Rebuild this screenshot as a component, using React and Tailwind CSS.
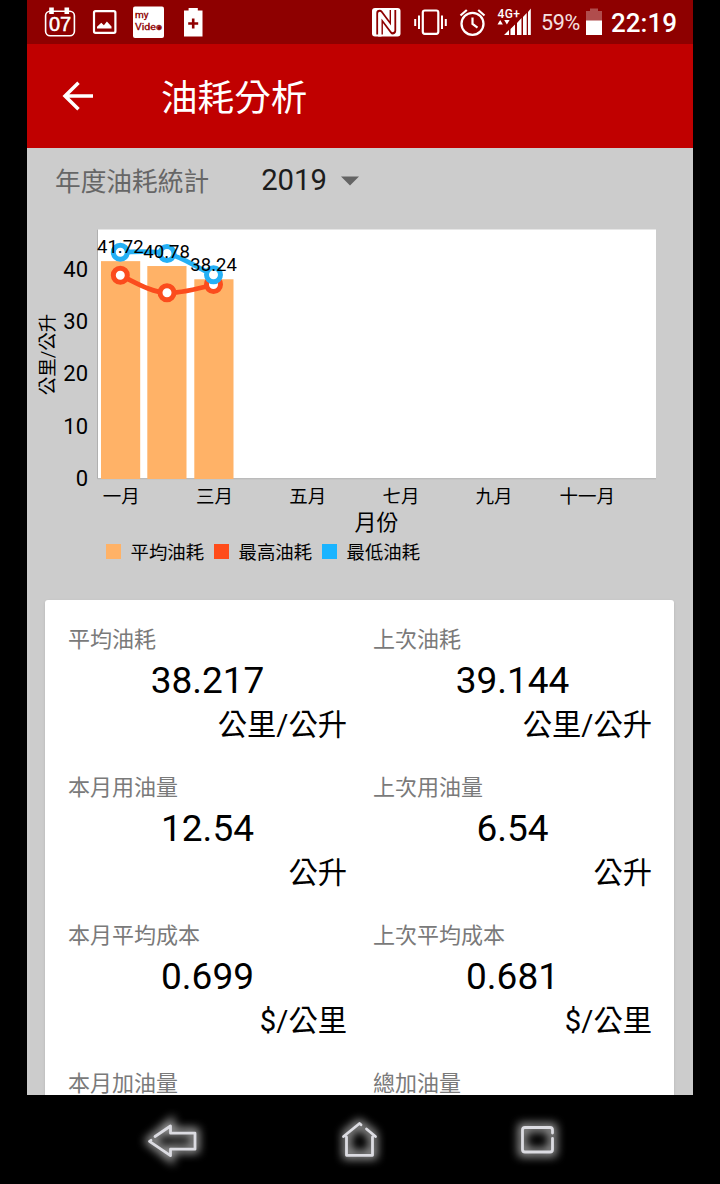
const months = ["一月", "三月", "五月", "七月", "九月", "十一月"];

const bars = [
  { x: 74, value: 41.72 },
  { x: 120.3, value: 40.78 },
  { x: 167.3, value: 38.24 },
];

const stats = [
  { label: "平均油耗", value: "38.217", unit: "公里/公升" },
  { label: "上次油耗", value: "39.144", unit: "公里/公升" },
  { label: "本月用油量", value: "12.54", unit: "公升" },
  { label: "上次用油量", value: "6.54", unit: "公升" },
  { label: "本月平均成本", value: "0.699", unit: "$/公里" },
  { label: "上次平均成本", value: "0.681", unit: "$/公里" },
  { label: "本月加油量", value: "", unit: "" },
  { label: "總加油量", value: "", unit: "" },
];

// y position inside the chart svg, 0 sits on the x axis
const toY = (value) => 266.5 - value * 5.21;

function StatusBar() {
  return (
    <div className="flex h-[44px] shrink-0 items-center bg-[#8e0000] text-white">
      <svg className="h-[44px] w-[210px]" viewBox="0 0 210 44" fill="none">
        {/* calendar */}
        <rect x="18.6" y="11.2" width="28.8" height="24.6" rx="4.5" stroke="#fff" strokeWidth="1.6" />
        <rect x="22.2" y="7.5" width="4.6" height="6.5" fill="#fff" />
        <rect x="37.5" y="7.5" width="4.6" height="6.5" fill="#fff" />
        <text x="33" y="30.5" textAnchor="middle" fontSize="20" fill="#fff" stroke="#fff" strokeWidth="0.5" className="font-['Liberation_Sans']">07</text>
        {/* picture */}
        <rect x="67" y="11.2" width="21.4" height="21.6" rx="1.5" stroke="#fff" strokeWidth="2.2" />
        <path d="M70 28.5v-1.7l4.3-4 2.6 2.4 3-3.7 4.6 5v2z" fill="#fff" />
        {/* myVideo */}
        <rect x="106" y="6.5" width="31" height="31.5" rx="2" fill="#fff" />
        <text x="108" y="18.3" fontSize="9" fill="#8e0000" stroke="#8e0000" strokeWidth="0.3" textLength="13.5" lengthAdjust="spacingAndGlyphs" className="font-['Roboto']">my</text>
        <text x="108" y="30.3" fontSize="9.5" fill="#8e0000" stroke="#8e0000" strokeWidth="0.3" textLength="27" lengthAdjust="spacingAndGlyphs" className="font-['Roboto']">Video</text>
        <circle cx="132.2" cy="27.7" r="1.8" fill="#8e0000" />
        {/* battery plus */}
        <path d="M157 10.5h4.6V8h9.2v2.5h4.7v26H157z" fill="#fff" />
        <path d="M166.2 18.5v10M161.2 23.5h10" stroke="#8e0000" strokeWidth="2.6" />
      </svg>
      <svg className="ml-[131px] h-[44px] w-[170px]" viewBox="0 0 170 44" fill="none">
        {/* nfc */}
        <rect x="4" y="8" width="28.5" height="28.5" rx="3" fill="#fff" />
        <path d="M11.6 34.5V13L24.9 31V10" stroke="#8e0000" strokeWidth="6.6" strokeLinejoin="round" />
        <path d="M11.8 36.5V13.5L24.7 30.500V8" stroke="#fff" strokeWidth="3.400" strokeLinejoin="round" />
        {/* vibrate */}
        <rect x="54.8" y="10.5" width="15.5" height="23.3" rx="2" stroke="#fff" strokeWidth="2.2" />
        <path d="M51 15.5v13.5M74 15.5v13.5M47.2 19v7M77.8 19v7" stroke="#fff" strokeWidth="2" />
        {/* alarm */}
        <circle cx="104.5" cy="23.8" r="11" stroke="#fff" strokeWidth="2.3" />
        <path d="M104.5 17.5v6.5l5 3.6M92.5 15.5l6.3-5.5M116.5 15.5l-6.3-5.5" stroke="#fff" strokeWidth="2.2" />
        {/* signal */}
        <text x="129.5" y="17.5" fontSize="12" fontWeight="500" fill="#fff" textLength="22.5" className="font-['Roboto']">4G+</text>
        <path d="M129.5 24.5 132.2 20l2.7 4.5zM136.2 20h5.4l-2.7 4.5z" fill="#fff" />
        <path d="M136 35l5-5v5zM142.5 29l4.5-4.5V35h-4.5zM149 23l4.5-5v17H149zM155 17l3.7-4v22H155zM160 12l2.8-3.5V35H160z" fill="#fff" />
      </svg>
      <span className="mt-[3px] ml-[3px] text-[21.5px] tracking-[-0.3px] text-[#f5e0e0]">59%</span>
      <svg className="ml-[5px] h-[44px] w-[18px]" viewBox="0 0 18 44">
        <path d="M1 11h4V8.5h8V11h4v10H1z" fill="#fff" fillOpacity="0.3" />
        <path d="M1 20.5h16V35H1z" fill="#fff" />
      </svg>
      <span className="mt-[2px] ml-[8px] text-[26px] font-medium">22:19</span>
    </div>
  );
}

function Toolbar() {
  return (
    <div className="flex h-[104px] shrink-0 items-center bg-[#c00000] text-white">
      <svg className="ml-[35px] h-[32px] w-[32px]" viewBox="0 0 32 32" fill="none">
        <path d="M31 16H3.5M16.5 2.7 3 16l13.5 13.3" stroke="#fff" strokeWidth="3.5" />
      </svg>
      <h1 className="mt-[6px] ml-[67px] text-[36.6px] leading-none">油耗分析</h1>
    </div>
  );
}

function FuelChart() {
  return (
    <svg className="h-[367px] w-[666px] shrink-0" viewBox="0 0 666 367" fill="none">
      <rect x="70.5" y="17.5" width="558.5" height="249" fill="#fff" />
      <path d="M70.5 17.5v249.2H629" stroke="#b0b0b0" />
      {bars.map((bar) => (
        <rect key={bar.x} x={bar.x} y={toY(bar.value)} width="39.2" height={bar.value * 5.21 + 0.5} fill="#ffb267" />
      ))}

      {/* highest */}
      <path d="M93.3 63.3C106 69 124 80.5 140 80.8C156 81 172 76.5 186.5 72.5" stroke="#fb4c1d" strokeWidth="4.8" />
      <g fill="#fff" stroke="#fb4c1d" strokeWidth="5">
        <circle cx="93.3" cy="63.3" r="7" />
        <circle cx="140" cy="80.8" r="7" />
        <circle cx="186.5" cy="72.5" r="7" />
      </g>
      {/* lowest */}
      <path d="M93.3 40.2C108 40 124 38 140 41.5C156 45 172 57 186.5 62.8" stroke="#25b0f5" strokeWidth="4.8" />
      <g fill="#fff" stroke="#25b0f5" strokeWidth="5">
        <circle cx="93.3" cy="40.2" r="7" />
        <circle cx="140" cy="41.5" r="7" />
        <circle cx="186.5" cy="62.8" r="7" />
      </g>

      <g fill="#000" fontSize="18.5" textAnchor="middle">
        {bars.map((bar) => (
          <text key={bar.x} x={bar.x + 19.3} y={toY(bar.value) - 8.5}>{bar.value}</text>
        ))}
        {months.map((month, i) => (
          <text key={month} x={94.3 + i * 93.2} y={290.5}>{month}</text>
        ))}
        <text transform="translate(27 142.5) rotate(-90)">公里/公升</text>
      </g>

      <g fill="#000" fontSize="22" textAnchor="end">
        {[0, 10, 20, 30, 40].map((tick) => (
          <text key={tick} x="61" y={266.3 - tick * 5.23 + 7.5}>{tick}</text>
        ))}
      </g>
      <text x="349.5" y="317.5" fontSize="22" textAnchor="middle" fill="#000">月份</text>

      <rect x="79" y="332" width="15" height="15" fill="#ffb267" />
      <rect x="187" y="332" width="15" height="15" fill="#ff4c1a" />
      <rect x="295" y="332" width="15" height="15" fill="#1ab4ff" />
      <g fill="#000" fontSize="18.4">
        <text x="103.5" y="347.3">平均油耗</text>
        <text x="211.5" y="347.3">最高油耗</text>
        <text x="319.5" y="347.3">最低油耗</text>
      </g>
    </svg>
  );
}

function Stat({ label, value, unit }) {
  return (
    <div className="h-[148px] w-[279px]">
      <p className="h-[34px] text-[22px] leading-[34px] text-[#7a7a7a]">{label}</p>
      <p className="h-[48px] text-center text-[37px] leading-[48px]">{value}</p>
      <p className="h-[40px] text-right text-[29.3px] leading-[40px]">{unit}</p>
    </div>
  );
}

function NavBar() {
  return (
    <svg className="h-[89px] w-full" viewBox="0 0 720 89" fill="none">
      <defs>
        <filter id="glow" x="-60%" y="-60%" width="220%" height="220%">
          <feGaussianBlur stdDeviation="5" />
        </filter>
      </defs>
      <g stroke="#fff" strokeWidth="8" opacity="0.65" filter="url(#glow)">
        <path d="M150 46l20-17v8h25v17h-25v8z" />
        <path d="M344 41l15-12 16 12M347 39v21h26V39" />
        <rect x="522.5" y="32.5" width="30" height="25" />
      </g>
      <g stroke="#dcdce2" strokeWidth="2.8" strokeLinecap="round" strokeLinejoin="round">
        <path d="M155 41.5 170.5 31v7.2H195v16H170.5v6.5L149.5 46.3l1.5-1" />
        <path d="M361 29.8 359.5 28.5 343.5 41.5M366.5 34l9 7.5M346.5 42v18.3H372.5V42" />
        <path d="M552.5 38V35q0-2.5-2.5-2.5H525q-2.5 0-2.5 2.5v19.5q0 2.5 2.5 2.5h25q2.5 0 2.5-2.5V43.5" />
      </g>
    </svg>
  );
}

export default function App() {
  return (
    <div className="h-[1184px] w-[720px] overflow-hidden bg-black font-['Roboto','Noto_Sans_CJK_TC',sans-serif]">
      <div className="ml-[27px] flex h-[1095px] w-[666px] flex-col overflow-hidden bg-[#cccccc] text-black">
        <StatusBar />
        <Toolbar />
        <div className="flex h-[64px] shrink-0 items-center pl-[28px]">
          <span className="mt-[5px] text-[25.7px] leading-none text-[#666666]">年度油耗統計</span>
          <span className="mt-[2px] ml-[52px] text-[29.3px] leading-none text-[#1c1c1c]">2019</span>
          <svg className="mt-[1px] ml-[13px] h-[10px] w-[20px]" viewBox="0 0 20 10">
            <path d="M1 0.5h18L10 9.5z" fill="#646464" />
          </svg>
        </div>
        <FuelChart />
        <div className="mt-[21px] mr-[19px] ml-[18px] grid h-[640px] shrink-0 grid-cols-[305px_279px] content-start rounded-[3px] bg-white pt-[23px] pl-[23px] shadow">
          {stats.map((stat) => (
            <Stat key={stat.label} {...stat} />
          ))}
        </div>
      </div>
      <NavBar />
    </div>
  );
}
